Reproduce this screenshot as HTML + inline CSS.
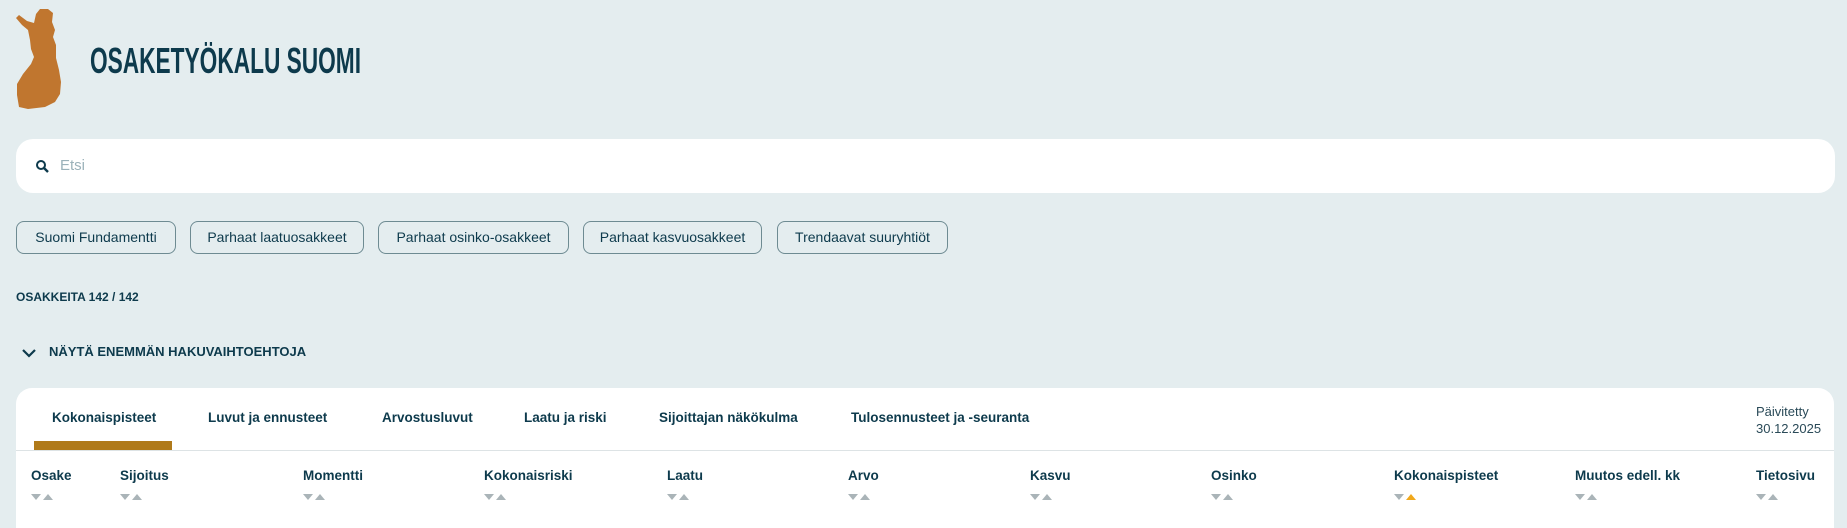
<!DOCTYPE html>
<html><head><meta charset="utf-8"><style>
*{box-sizing:border-box;margin:0;padding:0}
body{width:1847px;height:516px;overflow:hidden;background:#e4edef;font-family:"Liberation Sans",sans-serif;color:#0d3a4c;position:relative}
.a{position:absolute;white-space:nowrap}
.search{left:16px;top:139px;width:1819px;height:54px;background:#fff;border-radius:17px}
.btn{top:221px;height:33px;border:1px solid #6e8b92;border-radius:8px;font-size:14px;line-height:31px;text-align:center}
.card{left:16px;top:388px;width:1818px;height:140px;background:#fff;border-radius:16px 16px 0 0}
.tab{top:410px;font-size:13.5px;font-weight:600}
.col{top:468px;font-size:13.5px;font-weight:600}
.ar{top:494px;font-size:0}
.ar i{display:inline-block;width:0;height:0;border-left:5px solid transparent;border-right:5px solid transparent;margin-right:2px}
.ar i.d{border-top:6px solid #aab4b8}
.ar i.u{border-bottom:6px solid #aab4b8}
</style></head><body>
<svg class="a" style="left:0;top:0" width="70" height="115"><path fill="#c0762f" d="M16,18 L19,15 L27,21 L34,23 L36,14 L40,9 L48,9 L53,13 L52,22 L55,30 L53,37 L56,45 L56,58 L59,70 L61,82 L60,94 L55,102 L45,107 L28,109 L19,107 L17,95 L17,84 L23,74 L31,64 L34,57 L31,49 L30,40 L28,30 L22,25 Z"/></svg>
<svg class="a" style="left:88px;top:38px" width="290" height="45"><text x="2" y="35" font-family="Liberation Sans Narrow, Liberation Sans, sans-serif" font-weight="bold" font-size="36" fill="#0d3a4c" textLength="271" lengthAdjust="spacingAndGlyphs">OSAKETYÖKALU SUOMI</text></svg>
<div class="a search"></div>
<svg class="a" style="left:35px;top:159px" width="15" height="15"><circle cx="6" cy="6" r="4" fill="none" stroke="#0d3a4c" stroke-width="2"/><path d="M9,9 L13,13" stroke="#0d3a4c" stroke-width="2.4"/></svg>
<div class="a" style="left:60px;top:157px;font-size:15px;color:#9bb2ba">Etsi</div>
<div class="a btn" style="left:16px;width:160px">Suomi Fundamentti</div>
<div class="a btn" style="left:190px;width:174px">Parhaat laatuosakkeet</div>
<div class="a btn" style="left:378px;width:191px">Parhaat osinko-osakkeet</div>
<div class="a btn" style="left:583px;width:179px">Parhaat kasvuosakkeet</div>
<div class="a btn" style="left:777px;width:171px">Trendaavat suuryhtiöt</div>
<div class="a" style="left:16px;top:290px;font-size:12px;font-weight:700">OSAKKEITA 142 / 142</div>
<svg class="a" style="left:21px;top:347px" width="16" height="12"><path d="M2,3 L8,9 L14,3" fill="none" stroke="#0d3a4c" stroke-width="2.2"/></svg>
<div class="a" style="left:49px;top:344px;font-size:13px;font-weight:600">NÄYTÄ ENEMMÄN HAKUVAIHTOEHTOJA</div>
<div class="a card"></div>
<div class="a tab" style="left:52px">Kokonaispisteet</div>
<div class="a tab" style="left:208px">Luvut ja ennusteet</div>
<div class="a tab" style="left:382px">Arvostusluvut</div>
<div class="a tab" style="left:524px">Laatu ja riski</div>
<div class="a tab" style="left:659px">Sijoittajan näkökulma</div>
<div class="a tab" style="left:851px">Tulosennusteet ja -seuranta</div>
<div class="a" style="left:1756px;top:403px;font-size:13px;line-height:17px;color:#2a4a58">Päivitetty<br>30.12.2025</div>
<div class="a" style="left:34px;top:441px;width:138px;height:9px;background:#b07a1a"></div>
<div class="a" style="left:16px;top:450px;width:1818px;height:1px;background:#dde3e5"></div>
<div class="a col" style="left:31px">Osake</div><div class="a ar" style="left:31px"><i class="d"></i><i class="u"></i></div>
<div class="a col" style="left:120px">Sijoitus</div><div class="a ar" style="left:120px"><i class="d"></i><i class="u"></i></div>
<div class="a col" style="left:303px">Momentti</div><div class="a ar" style="left:303px"><i class="d"></i><i class="u"></i></div>
<div class="a col" style="left:484px">Kokonaisriski</div><div class="a ar" style="left:484px"><i class="d"></i><i class="u"></i></div>
<div class="a col" style="left:667px">Laatu</div><div class="a ar" style="left:667px"><i class="d"></i><i class="u"></i></div>
<div class="a col" style="left:848px">Arvo</div><div class="a ar" style="left:848px"><i class="d"></i><i class="u"></i></div>
<div class="a col" style="left:1030px">Kasvu</div><div class="a ar" style="left:1030px"><i class="d"></i><i class="u"></i></div>
<div class="a col" style="left:1211px">Osinko</div><div class="a ar" style="left:1211px"><i class="d"></i><i class="u"></i></div>
<div class="a col" style="left:1394px">Kokonaispisteet</div><div class="a ar" style="left:1394px"><i class="d"></i><i class="u" style="border-bottom-color:#f0a81c"></i></div>
<div class="a col" style="left:1575px">Muutos edell. kk</div><div class="a ar" style="left:1575px"><i class="d"></i><i class="u"></i></div>
<div class="a col" style="left:1756px">Tietosivu</div><div class="a ar" style="left:1756px"><i class="d"></i><i class="u"></i></div>
</body></html>
